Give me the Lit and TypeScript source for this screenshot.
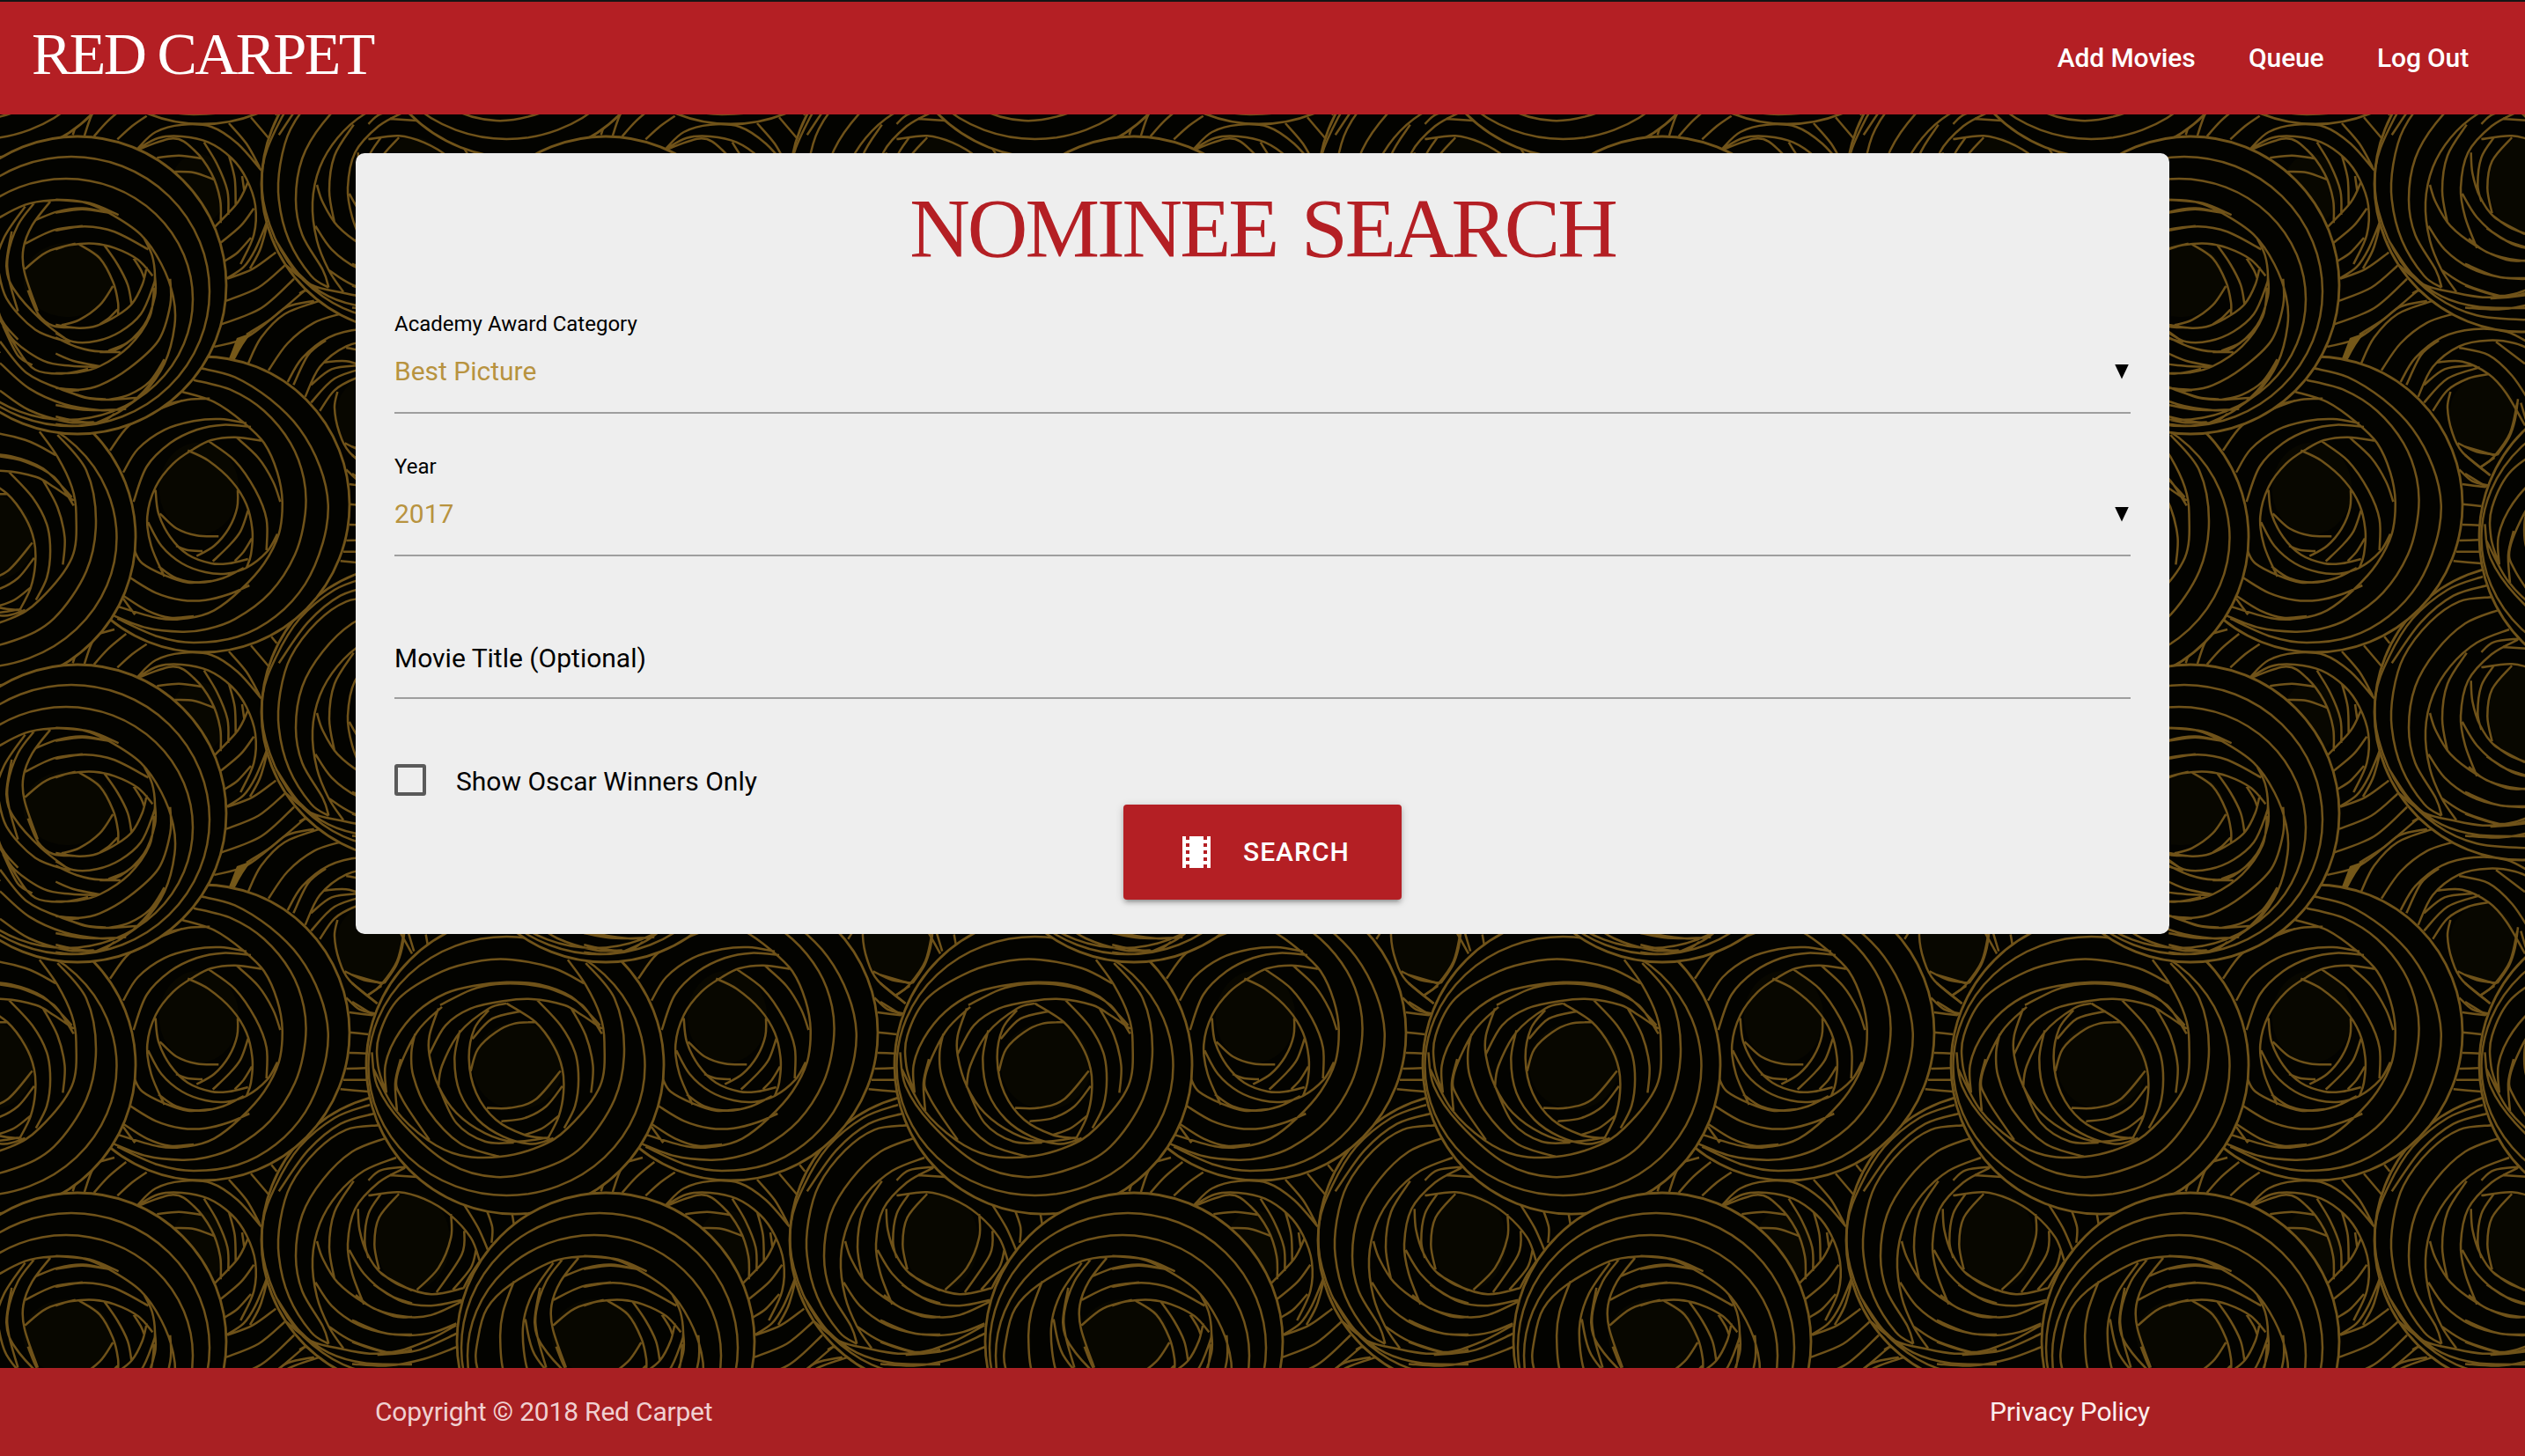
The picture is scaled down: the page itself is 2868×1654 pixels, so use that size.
import { LitElement, html, svg, css } from "lit";
import { customElement, property } from "lit/decorators.js";

type Point = [number, number];
type Frame = (u: number, v: number) => Point;
interface Rose {
  disc?: [number, number, number, number];
  rings?: [number, number, number, number][];
  hole?: [number, number, number, number];
  strands: [Frame, string][];
}

const TILE = 600;

// Drawing grids used by the strand tables, each mapped to tile units.
const gridP: Frame = (u, v) => [u / 3 - 20, 170 + v / 3];
const gridQ: Frame = (u, v) => [u / 3 - 20, 40 + v / 3];
const gridR: Frame = (u, v) => [400 + u / 2.45, v / 2.613 - 150];
const gridC: Frame = (u, v) => [u / 2.45 - 200, v / 2.613 - 150];
const gridS: Frame = (u, v) => [u / 3, 120 + v / 2.24];

// Smooth curve through a list of points (Catmull-Rom converted to cubics).
function strandPath(frame: Frame, text: string): string {
  return text
    .trim()
    .split("|")
    .map((line) => {
      const p = line
        .trim()
        .split(/\s+/)
        .map((pair) => {
          const [u, v] = pair.split(",").map(Number);
          return frame(u, v);
        });
      let d = `M${p[0][0].toFixed(1)} ${p[0][1].toFixed(1)}`;
      for (let i = 0; i < p.length - 1; i++) {
        const a = p[Math.max(0, i - 1)];
        const b = p[i];
        const c = p[i + 1];
        const e = p[Math.min(p.length - 1, i + 2)];
        const n = [
          b[0] + (c[0] - a[0]) / 6, b[1] + (c[1] - a[1]) / 6,
          c[0] - (e[0] - b[0]) / 6, c[1] - (e[1] - b[1]) / 6,
          c[0], c[1],
        ].map((k) => k.toFixed(1));
        d += `C${n.join(" ")}`;
      }
      return d;
    })
    .join("");
}

// Listed from the back of the pile to the front.
const roses: Rose[] = [
  {
    hole: [225, 215, 32, 40],
    strands: [[gridQ, `
      380,345 430,290 490,240|460,355 510,310 560,275|348,342 365,290 385,245|308,340 315,318|250,350 310,320 370,270|395,240 450,225
      |530,385 590,330 680,305 780,312 870,370 950,460|840,300 900,370 945,450|915,280 975,350|985,250 1003,272
      |530,387 600,350 680,345 770,365 850,420 900,490 930,580 925,680 880,780
      |530,390 650,352 720,390 780,470 810,560 812,640|755,365 800,440 835,530 838,612|840,410 860,490 863,580|885,480 892,528
      |595,418 670,410 745,420|655,465 720,468 790,492|905,500 870,570 790,655|925,590 880,650 812,707
      |915,690 870,740 825,770|968,640 930,730 890,790 830,830|955,480 975,600 950,720 912,795
      |835,830 920,797 1000,740|830,905 940,860 1030,785|815,985 950,930 1062,830|790,1062 900,1030 1010,945 1110,860
      |1080,880 1100,870 1120,880`]],
  },
  {
    hole: [420, 472, 38, 44],
    strands: [[gridP, `
      905,730 950,640 1030,560 1150,515|900,630 980,580 1040,535 1130,515|975,752 1040,660 1130,590 1218,560
      |1040,792 1090,710 1180,640 1290,612 1400,620 1480,660|1060,802 1110,700 1170,650
      |1100,842 1150,740 1240,670 1340,650 1430,660 1500,690|1120,862 1200,780 1310,742|1120,802 1190,748 1285,735
      |1165,725 1250,722 1340,765 1400,830 1464,940|1150,890 1200,820 1270,780 1340,765|1240,675 1340,700 1420,770 1480,860
      |1365,655 1464,730|1210,825 1200,880 1215,960 1250,1030 1345,1110|1440,850 1430,920 1410,980 1370,1040
      |1235,1000 1300,1030 1370,1040|1310,1083 1360,1050|1240,1090 1285,1130 1340,1145|1250,1140 1330,1150|1250,1208 1315,1215
      |1250,1278 1310,1280|1240,1332 1308,1330|1230,1370 1310,1370|1220,1402 1315,1410`],
      [gridR, `145,20 125,110 80,180 45,210|155,20 172,80|205,30 210,60|0,150 80,175|0,175 70,235|0,230 60,270`]],
  },
  {
    disc: [465, 209, 168, 168],
    hole: [469, 210, 42, 54],
    strands: [[gridQ, `
      1320,45 1200,90 1080,190 1000,320 955,450 965,600 1040,770 1160,890 1300,955 1464,970
      |1335,75 1220,110 1110,200 1010,340|1000,700 1080,815 1180,890 1300,925 1464,930
      |1350,115 1240,130 1140,200 1050,320 1015,440 1010,560 1045,700 1120,820 1180,860
      |1370,160 1260,205 1160,300 1090,420 1068,560 1090,680 1160,800 1180,860
      |1410,225 1300,270 1210,350 1150,450 1125,570 1140,700 1180,800 1230,875|1265,305 1200,410 1182,530 1200,640
      |1440,260 1350,310 1270,400 1245,520 1260,620 1300,725|1140,510 1160,570 1210,650 1300,720 1400,765 1464,768
      |1135,650 1190,730 1280,795 1380,825 1464,828|1180,800 1260,850 1390,890 1464,880|1030,780 1120,850 1230,878 1320,893 1400,890
      |1250,540 1300,620 1380,690 1464,722|1280,400 1285,470 1310,550 1360,620 1464,678`],
      [gridR, `
      45,805 130,795 200,815 270,860 330,930 355,1000|105,745 180,750|45,760 80,730 150,720
      |130,800 75,870 62,950 75,1025|80,800 45,860 35,940 45,990|75,1030 130,1070 220,1098 310,1080
      |60,1070 140,1120 220,1132 305,1115|10,1100 60,1140 150,1165 220,1160 305,1120|0,1175 80,1210 160,1220 230,1210 290,1185
      |0,1240 100,1270 200,1240 290,1190|70,1278 180,1265 290,1215|0,1305 100,1310 200,1290 290,1255
      |275,860 275,930 240,1020 180,1085|312,910 305,980 235,1092|345,965 330,1020 280,1085|355,1000 330,1040 310,1080
      |310,830 350,900 378,968|375,850 390,900 388,945|445,858 450,890`]],
  },
  {
    disc: [230, 573, 167, 168],
    hole: [226, 555, 45, 52],
    strands: [[gridP, `
      745,745 860,775 980,850 1080,950 1150,1080 1178,1210 1160,1340 1100,1480 1000,1590 870,1660 720,1680 600,1660 460,1598
      |720,785 850,820 960,890 1050,1000 1095,1120 1100,1240 1065,1380 980,1510 860,1600 760,1635 680,1643 560,1630 440,1585
      |680,825 790,860 890,930 960,1000 1005,1100 1022,1200 1010,1310 960,1410 880,1500 790,1570 700,1597 600,1597 440,1550
      |620,870 700,852 775,848|435,1025 500,940 590,890 680,855|480,1100 530,1020 620,955 720,925 810,918 900,932
      |515,1200 560,1080 640,1000 730,955 820,938 915,945|620,1455 575,1350 562,1250 590,1150 650,1070 720,1020 780,990 860,980 950,992
      |700,1025 770,1060 850,1130 900,1210 920,1300 915,1380 900,1425|770,993 860,1060 930,1160 968,1260 968,1365
      |865,980 940,1050 990,1130 1015,1200|590,1160 600,1240 640,1320 700,1380 780,1410 840,1410 905,1395
      |605,1240 660,1290 730,1315 805,1318|870,1160 868,1220 840,1290 790,1350 730,1385|905,1230 880,1300 840,1350 785,1403
      |918,1325 890,1370 860,1402|565,1270 610,1350 680,1410 760,1440 830,1445 900,1425 970,1370 1005,1310
      |600,1420 660,1460 740,1475 820,1460 890,1425|520,1370 545,1410 620,1450 700,1475 780,1470
      |505,1460 590,1510 680,1535 760,1535 840,1515 910,1485|480,1520 560,1570 640,1595 720,1590|480,1530 520,1585|660,1350 700,1365 750,1368`]],
  },
  {
    disc: [585, 10, 169, 169],
    rings: [[575.5, 11, 157, 147]],
    hole: [588, 11, 51, 49],
    strands: [[gridR, `
      95,500 72,420 75,330 130,220 250,140 360,108 445,105 560,130 645,175
      |650,115 730,220 757,370 730,520 640,660 530,725 400,750 270,710 140,590 70,480 55,380
      |600,105 650,180 690,270 702,350 690,480 600,605 520,660 410,690 300,685 210,640 120,550 60,430
      |95,500 92,420 120,340 180,260 260,205 340,182 430,172 520,178 610,215 690,300
      |245,240 330,195 400,178 480,178 560,195 640,240 695,325|215,640 140,520 125,450 180,320 250,245|125,555 120,470 135,400
      |410,690 300,650 210,550 170,450 165,380 175,325|240,250 215,330 215,390 240,480 290,560 370,620 450,645 550,632
      |215,385 260,300 330,250 420,228 500,222 590,240 640,270 695,310|240,485 250,420 300,320 380,250 430,235
      |300,315 285,400 300,500 350,580 420,630 500,652 560,635|380,255 340,310 325,400 345,500 400,580 480,625 545,635
      |335,340 390,280 470,258|330,435 350,370 400,320 450,295 510,290|430,235 510,290 560,360 585,430 588,500 575,570 545,635
      |515,225 580,300 620,380 630,460 620,540 590,605|610,250 650,330 670,420 665,500|375,545 440,545 510,520 580,435
      |415,585 480,575 540,540 585,480|480,625 530,605 575,568|240,480 290,590 370,645 450,648`]],
  },
  {
    disc: [88, 324, 169, 169],
    rings: [[81, 331, 157, 153], [75, 340, 144, 137]],
    hole: [77, 318, 50, 42],
    strands: [[gridP, `
      250,170 340,178 430,215 540,290 610,390 650,500 655,600 620,730 550,830 470,890|250,215 340,203 430,215
      |250,275 350,262 450,280 565,340|250,340 300,325 380,320 450,335 530,375 580,430|330,323 400,370 445,450 462,520 462,560
      |415,325 460,390 495,460 508,525|515,370 540,410 552,440|560,400 545,460 510,525 460,565 390,600 330,608 250,597
      |445,465 400,530 330,580 270,598|460,545 430,575 400,595
      |550,300 578,360 588,430 580,470 540,560 470,620 390,652 310,655 250,625|588,430 588,500 550,600 470,675 400,688 320,672 250,640
      |470,690 400,690|585,470 570,570 500,670 400,738 320,760 250,762|250,695 310,720 400,738|540,620 490,660 430,685
      |640,440 640,530 600,650 500,745 400,803 330,818 250,812|270,815 350,845 430,852 530,845|620,715 570,790 500,835 430,852
      |250,870 330,885 400,888 470,885|620,715 570,800 480,885 380,935|250,910 320,925 400,930 450,900|250,935 320,942 400,930`],
      [gridC, `
      650,985 560,1000 440,1070 375,1140 350,1230 348,1316 400,1420 480,1490
      |630,990 580,1060 555,1130 558,1200 595,1316|585,995 540,1060 512,1150 515,1220 540,1316
      |560,1005 500,1100 475,1200 490,1330 540,1400|450,1060 420,1150 412,1230 425,1340 490,1440
      |590,1045 650,1020 720,1010 800,1025|560,1115 640,1075 720,1063|560,1190 620,1140 700,1115|650,985 740,995 820,1030`],
      [gridS, `
      95,470 130,530 180,560 250,565|-10,400 22,490 120,570 235,602|40,320 22,410 50,470 140,545 240,602
      |0,545 50,600 150,650 240,662 330,665|0,540 60,620 120,672 210,682 300,670|0,655 100,720 220,760 340,775 430,772
      |0,600 90,680 210,722 270,724|200,720 290,742 360,747|0,725 100,775 230,805 320,805|110,660 60,635 10,560`]],
  },
];

function ellipse([cx, cy, rx, ry]: number[]): string {
  return `M${cx - rx} ${cy}a${rx} ${ry} 0 1 0 ${2 * rx} 0a${rx} ${ry} 0 1 0 ${-2 * rx} 0`;
}

const shifts: Point[] = [-TILE, 0, TILE].flatMap((x) => [-TILE, 0, TILE].map((y): Point => [x, y]));

const layers = roses.map((rose) => ({
  disc: rose.disc ? ellipse(rose.disc) : "",
  hole: rose.hole ? ellipse(rose.hole) : "",
  lines: (rose.rings ?? []).map(ellipse).join("") + rose.strands.map(([f, t]) => strandPath(f, t)).join(""),
}));

@customElement("rose-pattern")
export class RosePattern extends LitElement {
  static styles = css`
    :host { display: block; }
    .art { display: block; width: 100%; height: 100%; }
    .ground { fill: #030300; }
    .disc { fill: #030300; stroke: #705319; stroke-width: 2.8; }
    .hole { fill: #080700; }
    .strand { fill: none; stroke: #6f5219; stroke-width: 2.5; }
    .wedge { fill: #755819; }
  `;

  render() {
    return html`<svg class="art" aria-hidden="true">
      <defs>
        <pattern id="roses" width="600" height="600" patternUnits="userSpaceOnUse">
          <rect class="ground" width="600" height="600"></rect>
          ${layers.map((layer, i) =>
            shifts.map(
              ([x, y]) => svg`<g transform="translate(${x} ${y})">
                <path class="disc" d=${layer.disc}></path>
                <path class="hole" d=${layer.hole}></path>
                <path class="strand" d=${layer.lines}></path>
                ${i === 1 ? svg`<path class="wedge" d="M259 410L269 384L286 378Q276 390 267 408Z"></path>` : ""}
              </g>`
            )
          )}
        </pattern>
      </defs>
      <rect width="100%" height="100%" fill="url(#roses)"></rect>
    </svg>`;
  }
}

@customElement("select-field")
export class SelectField extends LitElement {
  @property() label = "";
  @property() value = "";

  static styles = css`
    :host { display: block; }
    .label { font-size: 24px; line-height: 30px; color: #000; }
    .control {
      display: flex; justify-content: space-between; align-items: center;
      margin-top: 19px; padding-bottom: 26px; border-bottom: 2px solid #9e9e9e;
    }
    .value { font-size: 30px; line-height: 40px; color: #b8933f; }
    .caret { width: 16px; height: 17px; margin-right: 2px; background: #000; clip-path: polygon(0 0, 100% 0, 50% 100%); }
  `;

  render() {
    return html`<div class="label">${this.label}</div>
      <div class="control"><span class="value">${this.value}</span><span class="caret"></span></div>`;
  }
}

@customElement("app-root")
export class AppRoot extends LitElement {
  static styles = css`
    :host { display: block; font-family: Roboto, "Liberation Sans", sans-serif; }
    .page { position: relative; display: flex; flex-direction: column; height: 1654px; overflow: hidden; box-sizing: border-box; }
    .backdrop { position: absolute; inset: 0; }
    .header, .main, .footer { position: relative; box-sizing: border-box; }
    .header {
      display: flex; justify-content: space-between; height: 130px; padding: 0 64px 0 36px;
      background: #b41f24; border-top: 2px solid #151515;
    }
    .brand { font-family: "Liberation Serif", serif; font-size: 68px; line-height: 118px; letter-spacing: -2.6px; color: #fff; white-space: nowrap; }
    .nav { display: flex; gap: 60.5px; }
    .link { font-size: 30px; font-weight: 500; line-height: 127px; letter-spacing: -0.15px; color: #fff; }
    .main { flex: 1; padding: 44px 404px 0; }
    .card {
      display: flex; flex-direction: column; height: 887px; box-sizing: border-box;
      padding: 26px 44px 0; border-radius: 10px; background: #eee;
    }
    .title {
      margin: 0; font-family: "Liberation Serif", serif; font-weight: 400; font-size: 95px; line-height: 120px;
      letter-spacing: -3px; word-spacing: 7px; text-align: center; color: #b41f24;
    }
    .first { margin-top: 33px; }
    .second { margin-top: 45px; }
    .text-field { margin-top: 96px; padding-bottom: 24px; border-bottom: 2px solid #9e9e9e; font-size: 30px; line-height: 40px; color: #000; }
    .check { display: flex; gap: 34px; height: 36px; margin-top: 74px; }
    .box { width: 36px; height: 36px; box-sizing: border-box; border: 4px solid #5a5a5a; border-radius: 3px; }
    .check-label { font-size: 30px; line-height: 39px; color: #000; }
    .search {
      display: flex; align-items: center; align-self: center; gap: 29px; width: 316px; height: 108px;
      margin-top: 10px; padding: 0 0 0 59px; box-sizing: border-box; border: 0; border-radius: 4px;
      background: #b41f24; color: #fff; font: 500 30px/108px Roboto, sans-serif; letter-spacing: 1px;
      box-shadow: 0 4px 4px rgba(0, 0, 0, 0.14), 0 6px 2px -4px rgba(0, 0, 0, 0.12), 0 2px 10px rgba(0, 0, 0, 0.2);
    }
    .film { width: 48px; height: 48px; fill: #fff; }
    .footer { display: flex; justify-content: space-between; height: 100px; padding: 0 426px; background: #a92023; font-size: 30px; line-height: 99px; letter-spacing: -0.2px; }
    .copyright { color: #f0d0d1; }
    .privacy { color: #fbeeee; }
  `;

  render() {
    return html`<div class="page">
      <rose-pattern class="backdrop"></rose-pattern>
      <header class="header">
        <div class="brand">RED CARPET</div>
        <nav class="nav">
          ${["Add Movies", "Queue", "Log Out"].map((t) => html`<a class="link">${t}</a>`)}
        </nav>
      </header>
      <main class="main">
        <section class="card">
          <h1 class="title">NOMINEE SEARCH</h1>
          <select-field class="first" label="Academy Award Category" value="Best Picture"></select-field>
          <select-field class="second" label="Year" value="2017"></select-field>
          <div class="text-field">Movie Title (Optional)</div>
          <label class="check"><span class="box"></span><span class="check-label">Show Oscar Winners Only</span></label>
          <button class="search">
            <svg class="film" viewBox="0 0 24 24" shape-rendering="crispEdges">
              <path d="M18 3v2h-2V3H8v2H6V3H4v18h2v-2h2v2h8v-2h2v2h2V3h-2zM8 17H6v-2h2v2zm0-4H6v-2h2v2zm0-4H6V7h2v2zm10 8h-2v-2h2v2zm0-4h-2v-2h2v2zm0-4h-2V7h2v2z"></path>
            </svg>
            <span>SEARCH</span>
          </button>
        </section>
      </main>
      <footer class="footer">
        <span class="copyright">Copyright © 2018 Red Carpet</span>
        <span class="privacy">Privacy Policy</span>
      </footer>
    </div>`;
  }
}
